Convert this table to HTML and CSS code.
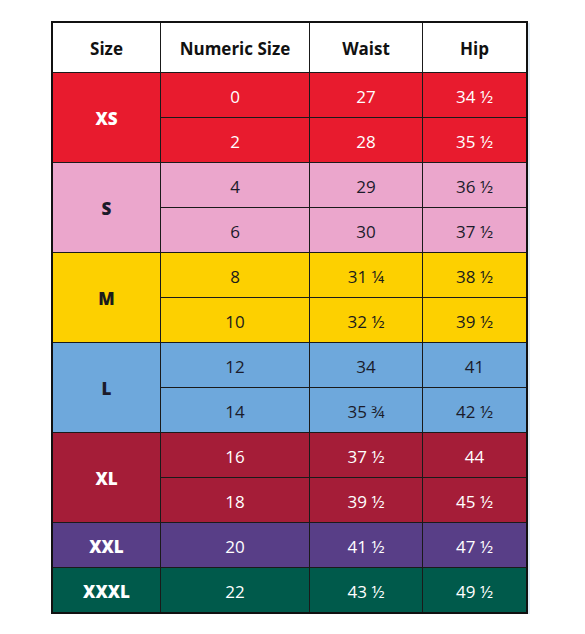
FILE: index.html
```html
<!DOCTYPE html>
<html lang="en">
<head>
  <meta charset="UTF-8">
  <title>Size Chart</title>
  <link rel="stylesheet" href="styles.css">
</head>
<body>

<div class="chart">
  <table class="sizes">
    <thead>
      <tr>
        <th class="col-size">Size</th>
        <th class="col-num">Numeric Size</th>
        <th class="col-waist">Waist</th>
        <th class="col-hip">Hip</th>
      </tr>
    </thead>
    <tbody>
      <tr class="xs">
        <td class="label" rowspan="2">XS</td>
        <td>0</td><td>27</td><td>34 ½</td>
      </tr>
      <tr class="xs">
        <td>2</td><td>28</td><td>35 ½</td>
      </tr>
      <tr class="s">
        <td class="label" rowspan="2">S</td>
        <td>4</td><td>29</td><td>36 ½</td>
      </tr>
      <tr class="s">
        <td>6</td><td>30</td><td>37 ½</td>
      </tr>
      <tr class="m">
        <td class="label" rowspan="2">M</td>
        <td>8</td><td>31 ¼</td><td>38 ½</td>
      </tr>
      <tr class="m">
        <td>10</td><td>32 ½</td><td>39 ½</td>
      </tr>
      <tr class="l">
        <td class="label" rowspan="2">L</td>
        <td>12</td><td>34</td><td>41</td>
      </tr>
      <tr class="l">
        <td>14</td><td>35 ¾</td><td>42 ½</td>
      </tr>
      <tr class="xl">
        <td class="label" rowspan="2">XL</td>
        <td>16</td><td>37 ½</td><td>44</td>
      </tr>
      <tr class="xl">
        <td>18</td><td>39 ½</td><td>45 ½</td>
      </tr>
      <tr class="xxl">
        <td class="label">XXL</td>
        <td>20</td><td>41 ½</td><td>47 ½</td>
      </tr>
      <tr class="xxxl">
        <td class="label">XXXL</td>
        <td>22</td><td>43 ½</td><td>49 ½</td>
      </tr>
    </tbody>
  </table>
</div>

</body>
</html>
```

FILE: styles.css
```css
body {
  margin: 0;
  padding: 0;
  background-color: #fff;
  font-family: "Open Sans", Arial, sans-serif;
}

.chart {
  padding: 21px 0 0 51px;
}

.sizes {
  border-collapse: collapse;
  border: 2px solid #111;
  box-shadow: 2px 2px 0 #e3eef7;
  table-layout: fixed;
  width: 474px;
}

.sizes th,
.sizes td {
  border: 1px solid #1a1a1a;
  text-align: center;
  padding: 2px 0 0;
  font-size: 17px;
}

.sizes th {
  height: 47px;
  font-weight: 700;
  color: #111;
  background-color: #fff;
}

.sizes td {
  height: 42px;
  font-weight: 500;
}

.sizes .label {
  font-weight: 800;
}

.col-size { width: 107px; }
.col-num { width: 148px; }
.col-waist { width: 112px; }
.col-hip { width: 103px; }

.xs { background-color: #e81b2e; color: #fff; }
.s { background-color: #eba6cc; color: #1b1b2a; }
.m { background-color: #fdd000; color: #1b1b1b; }
.l { background-color: #6ea8dc; color: #1b1b2a; }
.xl { background-color: #a51d38; color: #fff; }
.xxl { background-color: #583e87; color: #fff; }
.xxxl { background-color: #005a4b; color: #fff; }
```
